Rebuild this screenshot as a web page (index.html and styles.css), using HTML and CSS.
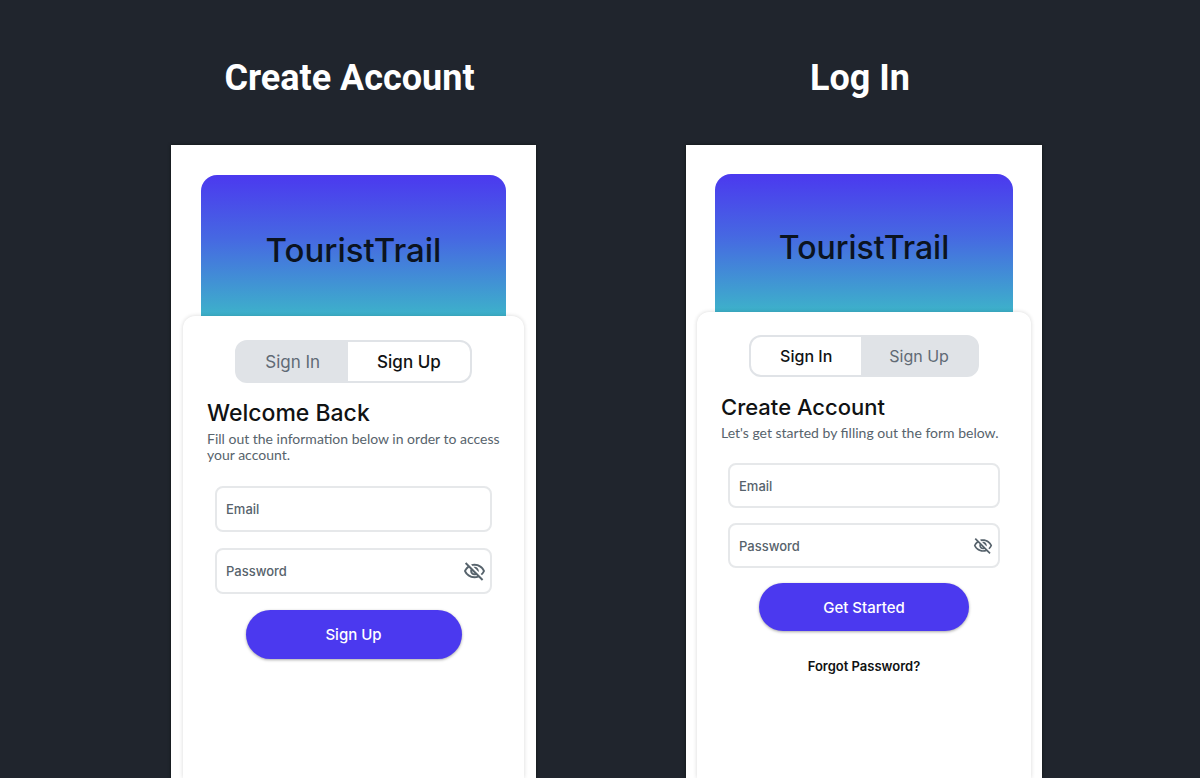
FILE: index.html
```html
<!DOCTYPE html>
<html lang="en">
<head>
  <meta charset="UTF-8">
  <meta name="viewport" content="width=device-width, initial-scale=1.0">
  <title>TouristTrail</title>
  <link rel="stylesheet" href="styles.css">
</head>
<body>

<main class="screens">

  <!-- Create Account -->
  <section class="screen">
    <h1>Create Account</h1>
    <div class="phone">
      <div class="banner">TouristTrail</div>
      <form class="card">
        <div class="tabs">
          <button type="button" class="tab inactive">Sign In</button>
          <button type="button" class="tab">Sign Up</button>
        </div>
        <h2>Welcome Back</h2>
        <p class="intro">Fill out the information below in order to access your account.</p>
        <div class="field">
          <input type="email" aria-label="Email" placeholder="Email">
        </div>
        <div class="field">
          <input type="password" aria-label="Password" placeholder="Password">
          <button type="button" class="eye" aria-label="Show password">
            <svg viewBox="0 0 24 24"><path d="M12 6c3.79 0 7.17 2.13 8.82 5.5-.59 1.22-1.42 2.27-2.41 3.12l1.41 1.41c1.39-1.23 2.49-2.77 3.18-4.53C21.27 7.11 17 4 12 4c-1.27 0-2.49.2-3.64.57l1.65 1.65C10.66 6.09 11.32 6 12 6zm-1.07 1.14L13 9.21c.57.25 1.03.71 1.28 1.28l2.07 2.07c.08-.34.14-.7.14-1.07C16.5 9.01 14.48 7 12 7c-.37 0-.72.05-1.07.14zM2.01 3.87l2.68 2.68C3.06 7.83 1.77 9.53 1 11.5 2.73 15.89 7 19 12 19c1.52 0 2.98-.29 4.32-.82l3.42 3.42 1.41-1.41L3.42 2.45 2.01 3.87zm7.5 7.5l2.61 2.61c-.04.01-.08.02-.12.02-1.38 0-2.5-1.12-2.5-2.5 0-.05.01-.08.01-.13zm-3.4-3.4l1.75 1.75c-.23.55-.36 1.15-.36 1.78 0 2.48 2.02 4.5 4.5 4.5.63 0 1.23-.13 1.77-.36l.98.98c-.88.24-1.8.38-2.75.38-3.79 0-7.17-2.13-8.82-5.5.7-1.43 1.72-2.61 2.93-3.53z"/></svg>
          </button>
        </div>
        <button type="submit" class="submit">Sign Up</button>
      </form>
    </div>
  </section>

  <!-- Log In -->
  <section class="screen compact">
    <h1>Log In</h1>
    <div class="phone">
      <div class="banner">TouristTrail</div>
      <form class="card">
        <div class="tabs">
          <button type="button" class="tab">Sign In</button>
          <button type="button" class="tab inactive">Sign Up</button>
        </div>
        <h2>Create Account</h2>
        <p class="intro">Let's get started by filling out the form below.</p>
        <div class="field">
          <input type="email" aria-label="Email" placeholder="Email">
        </div>
        <div class="field">
          <input type="password" aria-label="Password" placeholder="Password">
          <button type="button" class="eye" aria-label="Show password">
            <svg viewBox="0 0 24 24"><path d="M12 6c3.79 0 7.17 2.13 8.82 5.5-.59 1.22-1.42 2.27-2.41 3.12l1.41 1.41c1.39-1.23 2.49-2.77 3.18-4.53C21.27 7.11 17 4 12 4c-1.27 0-2.49.2-3.64.57l1.65 1.65C10.66 6.09 11.32 6 12 6zm-1.07 1.14L13 9.21c.57.25 1.03.71 1.28 1.28l2.07 2.07c.08-.34.14-.7.14-1.07C16.5 9.01 14.48 7 12 7c-.37 0-.72.05-1.07.14zM2.01 3.87l2.68 2.68C3.06 7.83 1.77 9.53 1 11.5 2.73 15.89 7 19 12 19c1.52 0 2.98-.29 4.32-.82l3.42 3.42 1.41-1.41L3.42 2.45 2.01 3.87zm7.5 7.5l2.61 2.61c-.04.01-.08.02-.12.02-1.38 0-2.5-1.12-2.5-2.5 0-.05.01-.08.01-.13zm-3.4-3.4l1.75 1.75c-.23.55-.36 1.15-.36 1.78 0 2.48 2.02 4.5 4.5 4.5.63 0 1.23-.13 1.77-.36l.98.98c-.88.24-1.8.38-2.75.38-3.79 0-7.17-2.13-8.82-5.5.7-1.43 1.72-2.61 2.93-3.53z"/></svg>
          </button>
        </div>
        <button type="submit" class="submit">Get Started</button>
        <a class="forgot" href="#">Forgot Password?</a>
      </form>
    </div>
  </section>

</main>

</body>
</html>
```
FILE: styles.css
```css
* {
  box-sizing: border-box;
}
body {
  margin: 0;
  background-color: #20252d;
  font-family: Inter, sans-serif;
}
.screens {
  display: grid;
  grid-template-columns: 365fr 356fr;
  column-gap: 150px;
  min-height: 100vh;
  padding: 54px 158px 0 171px;
}
.screen {
  display: flex;
  flex-direction: column;
}
h1 {
  margin: 0 0 43px;
  padding-right: 8px;
  color: white;
  font: bold 36px/48px Roboto, sans-serif;
  text-align: center;
}
.phone {
  flex: 1;
  display: flex;
  flex-direction: column;
  padding: 30px 12px 0;
  background: white;
  box-shadow: 0 0 3px #111514;
}
.banner {
  display: flex;
  align-items: center;
  justify-content: center;
  height: 141px;
  padding-top: 8px;
  margin: 0 18px;
  border-radius: 16px 16px 0 0;
  background: linear-gradient(#4b39ef, #4668e2 45%, #3db2ca);
  color: #0b1320;
  font-size: 33px;
  font-weight: 500;
}
.card {
  flex: 1;
  display: flex;
  flex-direction: column;
  padding: 24px;
  border-radius: 12px 12px 0 0;
  background: white;
  box-shadow: 0 0 4px rgba(0, 0, 0, 0.16);
}

/* Sign In / Sign Up switch */
.tabs {
  align-self: center;
  display: flex;
  height: 43px;
  margin-bottom: 15px;
  border: 2px solid #e0e3e7;
  border-radius: 12px;
  background: #e0e3e7;
  overflow: hidden;
}
.tab {
  padding: 0 29px;
  border: none;
  background: white;
  color: #101213;
  font-family: inherit;
  font-size: 17px;
  font-weight: 500;
}
.tab.inactive {
  padding: 0 28px;
  background: #e0e3e7;
  color: #606a75;
  font-weight: 400;
}

h2 {
  margin: 0;
  color: #101213;
  font-size: 23px;
  font-weight: 500;
  line-height: 30px;
}
.intro {
  margin: 3px -8px 23px 0;
  color: #57636c;
  font-family: Lato, sans-serif;
  font-size: 14px;
  font-weight: 400;
  line-height: 16px;
}

/* Form fields */
.field {
  display: flex;
  align-items: center;
  height: 46px;
  margin: 0 8px 16px;
  padding: 0 4px 0 9px;
  border: 2px solid #e6e8ea;
  border-radius: 8px;
}
.field input {
  flex: 1;
  min-width: 0;
  padding: 0;
  border: none;
  outline: none;
  background: none;
  font: 500 13px Inter, sans-serif;
}
.field input::placeholder {
  color: #57636c;
}
.eye {
  display: flex;
  padding: 0;
  border: none;
  background: none;
}
.eye svg {
  width: 23px;
  height: 23px;
  fill: #57636c;
}
.submit {
  align-self: center;
  width: 216px;
  height: 49px;
  border: none;
  border-radius: 25px;
  background: #4b39ef;
  box-shadow: 0 1px 3px rgba(0, 0, 0, 0.35);
  color: white;
  font-family: inherit;
  font-size: 15px;
  font-weight: 500;
}
.forgot {
  align-self: center;
  margin-top: 27px;
  color: #101213;
  font-size: 13px;
  font-weight: 600;
  line-height: 16px;
  text-decoration: none;
}

/* Slightly smaller second screen */
.compact .phone {
  padding: 29px 11px 0;
}
.compact .banner {
  height: 138px;
  font-size: 32px;
}
.compact .card {
  padding-top: 23px;
}
.compact .tabs {
  height: 42px;
}
.compact .tab {
  font-size: 16px;
}
.compact h2 {
  font-size: 22px;
}
.compact .intro {
  margin-bottom: 22px;
}
.compact .field {
  height: 45px;
  padding-right: 5px;
  margin: 0 7px 15px;
}
.compact .eye svg {
  width: 20px;
  height: 20px;
}
.compact .submit {
  width: 210px;
  height: 48px;
}
```
